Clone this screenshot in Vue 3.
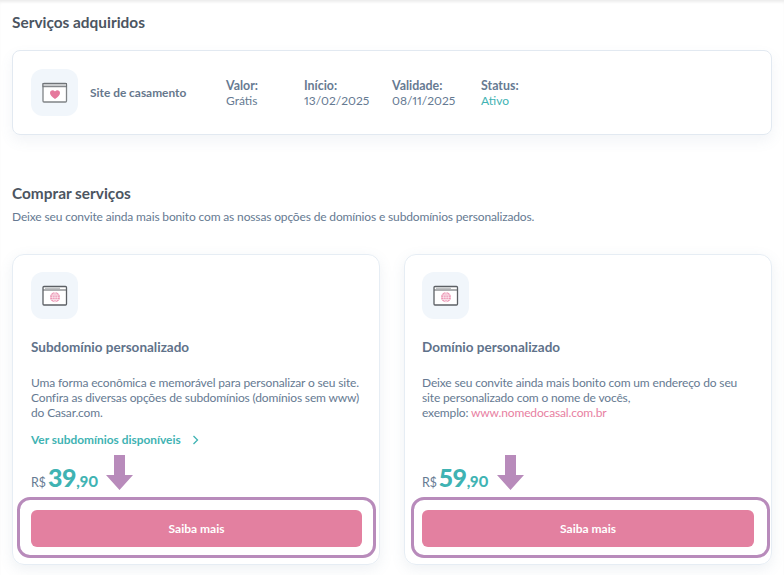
<script setup>
const details = [
  { label: 'Valor:', value: 'Grátis', width: '78px' },
  { label: 'Início:', value: '13/02/2025', width: '88px' },
  { label: 'Validade:', value: '08/11/2025', width: '89px' },
  { label: 'Status:', value: 'Ativo', width: '60px', active: true }
]
</script>

<template>
  <div class="page">
    <section class="owned">
      <h2 class="section-title">Serviços adquiridos</h2>
      <div class="owned-card">
        <div class="icon-tile">
          <svg width="26" height="22" viewBox="0 0 26 22">
            <rect x="1" y="1.500" width="23.500" height="18.500" rx="1" fill="#fff" stroke="#808487" stroke-width="1.300" />
            <rect x="1" y="1.500" width="23.500" height="3.200" fill="#c9cbcd" stroke="#707478" stroke-width="1" />
            <path d="M13 17c-3-2.300-5-3.800-5-6.100C8 9.300 9.200 8.200 10.600 8.200c1 0 1.900.6 2.400 1.400.5-.8 1.400-1.400 2.400-1.400C16.800 8.200 18 9.300 18 10.900c0 2.300-2 3.800-5 6.100z" fill="#e5789c" />
          </svg>
        </div>
        <div class="owned-name">Site de casamento</div>
        <div class="detail" v-for="d in details" :key="d.label" :style="{ width: d.width }">
          <strong>{{ d.label }}</strong>
          <span :class="{ active: d.active }">{{ d.value }}</span>
        </div>
      </div>
    </section>

    <section class="buy">
      <h2 class="section-title">Comprar serviços</h2>
      <p class="intro">Deixe seu convite ainda mais bonito com as nossas opções de domínios e subdomínios personalizados.</p>
      <div class="offers">
        <article class="offer">
          <div class="icon-tile">
            <svg width="26" height="22" viewBox="0 0 26 22">
              <rect x="1" y="1.500" width="23.500" height="18.500" rx="1" fill="#fff" stroke="#5c6065" stroke-width="1.300" />
              <path d="M1 5h23.500" stroke="#5c6065" />
              <path d="M3 3.300h15" stroke="#b9bbbe" stroke-width="1.200" />
              <circle cx="13" cy="12.300" r="5" fill="#ec94b3" />
              <path d="M8 12.300h10M13 7.300v10M8.800 10h8.400M8.800 14.600h8.400M13 7.300c-3.200 2.900-3.200 7.100 0 10M13 7.300c3.200 2.900 3.200 7.100 0 10" stroke="#fff" stroke-width=".6" fill="none" />
            </svg>
          </div>
          <h3 class="offer-title">Subdomínio personalizado</h3>
          <p class="offer-text">Uma forma econômica e memorável para personalizar o seu site. Confira as diversas opções de subdomínios (domínios sem www) do Casar.com.</p>
          <a class="see-more">Ver subdomínios disponíveis
            <svg width="7" height="10" viewBox="0 0 7 10"><path d="M1.500 1l4 4-4 4" fill="none" stroke="#3fb3b3" stroke-width="1.300" /></svg>
          </a>
          <div class="price"><small>R$</small> <b>39</b><em>,90</em></div>
          <button class="cta">Saiba mais</button>
          <svg class="mark-arrow" width="27" height="35" viewBox="0 0 27 35"><path d="M8 0h11v20h8L13.500 35 0 20h8z" fill="#b88bbb" /></svg>
          <div class="mark-box"></div>
        </article>

        <article class="offer right">
          <div class="icon-tile">
            <svg width="26" height="22" viewBox="0 0 26 22">
              <rect x="1" y="1.500" width="23.500" height="18.500" rx="1" fill="#fff" stroke="#5c6065" stroke-width="1.300" />
              <path d="M1 5h23.500" stroke="#5c6065" />
              <path d="M3 3.300h15" stroke="#b9bbbe" stroke-width="1.200" />
              <circle cx="13" cy="12.300" r="5" fill="#ec94b3" />
              <path d="M8 12.300h10M13 7.300v10M8.800 10h8.400M8.800 14.600h8.400M13 7.300c-3.200 2.900-3.200 7.100 0 10M13 7.300c3.200 2.900 3.200 7.100 0 10" stroke="#fff" stroke-width=".6" fill="none" />
            </svg>
          </div>
          <h3 class="offer-title">Domínio personalizado</h3>
          <p class="offer-text">Deixe seu convite ainda mais bonito com um endereço do seu<br />site personalizado com o nome de vocês,<br />exemplo: <span class="pink">www.nomedocasal.com.br</span></p>
          <div class="price second"><small>R$</small> <b>59</b><em>,90</em></div>
          <button class="cta">Saiba mais</button>
          <svg class="mark-arrow" width="27" height="35" viewBox="0 0 27 35"><path d="M8 0h11v20h8L13.500 35 0 20h8z" fill="#b88bbb" /></svg>
          <div class="mark-box"></div>
        </article>
      </div>
    </section>
  </div>
</template>

<style scoped>
.page {
  width: 784px;
  height: 575px;
  overflow: hidden;
  box-sizing: border-box;
  padding: 13px 12px 0;
  background: #fff;
  box-shadow: inset 0 3px 3px -1px #ececec;
  font-family: Lato, "Open Sans", sans-serif;
  font-variant-numeric: proportional-nums;
  color: #667a92;
}
.section-title {
  margin: 0;
  font-size: 15.400px;
  line-height: 18px;
  font-weight: 700;
  color: #4c5561;
}
.owned-card {
  display: flex;
  align-items: center;
  height: 85px;
  box-sizing: border-box;
  margin-top: 19px;
  padding: 0 18px;
  border: 1px solid #e2e9f1;
  border-radius: 8px;
  box-shadow: 0 6px 14px rgba(90, 120, 150, 0.08);
}
.icon-tile {
  width: 47px;
  height: 47px;
  flex: none;
  display: flex;
  align-items: center;
  justify-content: center;
  border-radius: 12px;
  background: #f1f6fb;
}
.owned-name {
  width: 136px;
  margin-left: 12px;
  font-size: 11.900px;
  font-weight: 700;
  color: #66778c;
}
.detail {
  display: flex;
  flex-direction: column;
  font-size: 12px;
  line-height: 15px;
}
.detail strong {
  font-size: 12.400px;
  font-weight: 700;
}
.active {
  color: #3fb3b3;
}
.buy {
  margin-top: 49px;
}
.intro {
  margin: 7px 0 0;
  font-size: 12px;
  line-height: 15px;
  letter-spacing: -0.150px;
}
.offers {
  display: grid;
  grid-template-columns: 368px 368px;
  gap: 24px;
  margin-top: 30px;
}
.offer {
  position: relative;
  height: 311px;
  box-sizing: border-box;
  padding: 17px 17px 17px 18px;
  border: 1px solid #e6edf4;
  border-radius: 12px;
  box-shadow: 0 4px 14px rgba(90, 120, 150, 0.1);
}
.offer.right {
  padding-left: 17px;
}
.offer-title {
  margin: 20px 0 0;
  font-size: 13.500px;
  line-height: 17px;
  font-weight: 700;
  color: #5f728a;
}
.offer-text {
  height: 45px;
  margin: 19px 0 0;
  font-size: 12px;
  line-height: 15px;
  letter-spacing: -0.150px;
}
.pink {
  color: #e87fa2;
}
.see-more {
  display: flex;
  align-items: center;
  gap: 11px;
  margin-top: 12px;
  font-size: 11.900px;
  line-height: 15px;
  font-weight: 700;
  color: #3fb3b3;
}
.price {
  display: flex;
  align-items: baseline;
  gap: 2px;
  height: 30px;
  margin-top: 15px;
  line-height: 30px;
}
.price.second {
  margin-top: 42px;
}
.price small {
  font-size: 12.500px;
}
.price b {
  font-size: 25px;
  font-weight: 900;
  color: #3fb3b3;
}
.price em {
  margin-left: -2px;
  font-style: normal;
  font-size: 15px;
  font-weight: 900;
  color: #3fb3b3;
}
.cta {
  display: block;
  width: 100%;
  height: 37px;
  margin-top: 18px;
  border: none;
  border-radius: 6px;
  background: #e380a0;
  color: #fff;
  font-family: inherit;
  font-size: 12px;
  font-weight: 700;
}
.mark-arrow {
  position: absolute;
  left: 93px;
  top: 200px;
}
.mark-box {
  position: absolute;
  left: 4px;
  top: 242px;
  width: 353px;
  height: 55px;
  border: 3px solid #b88bbb;
  border-radius: 13px;
}
.right .mark-arrow {
  left: 92px;
}
.right .mark-box {
  left: 6px;
}
</style>
